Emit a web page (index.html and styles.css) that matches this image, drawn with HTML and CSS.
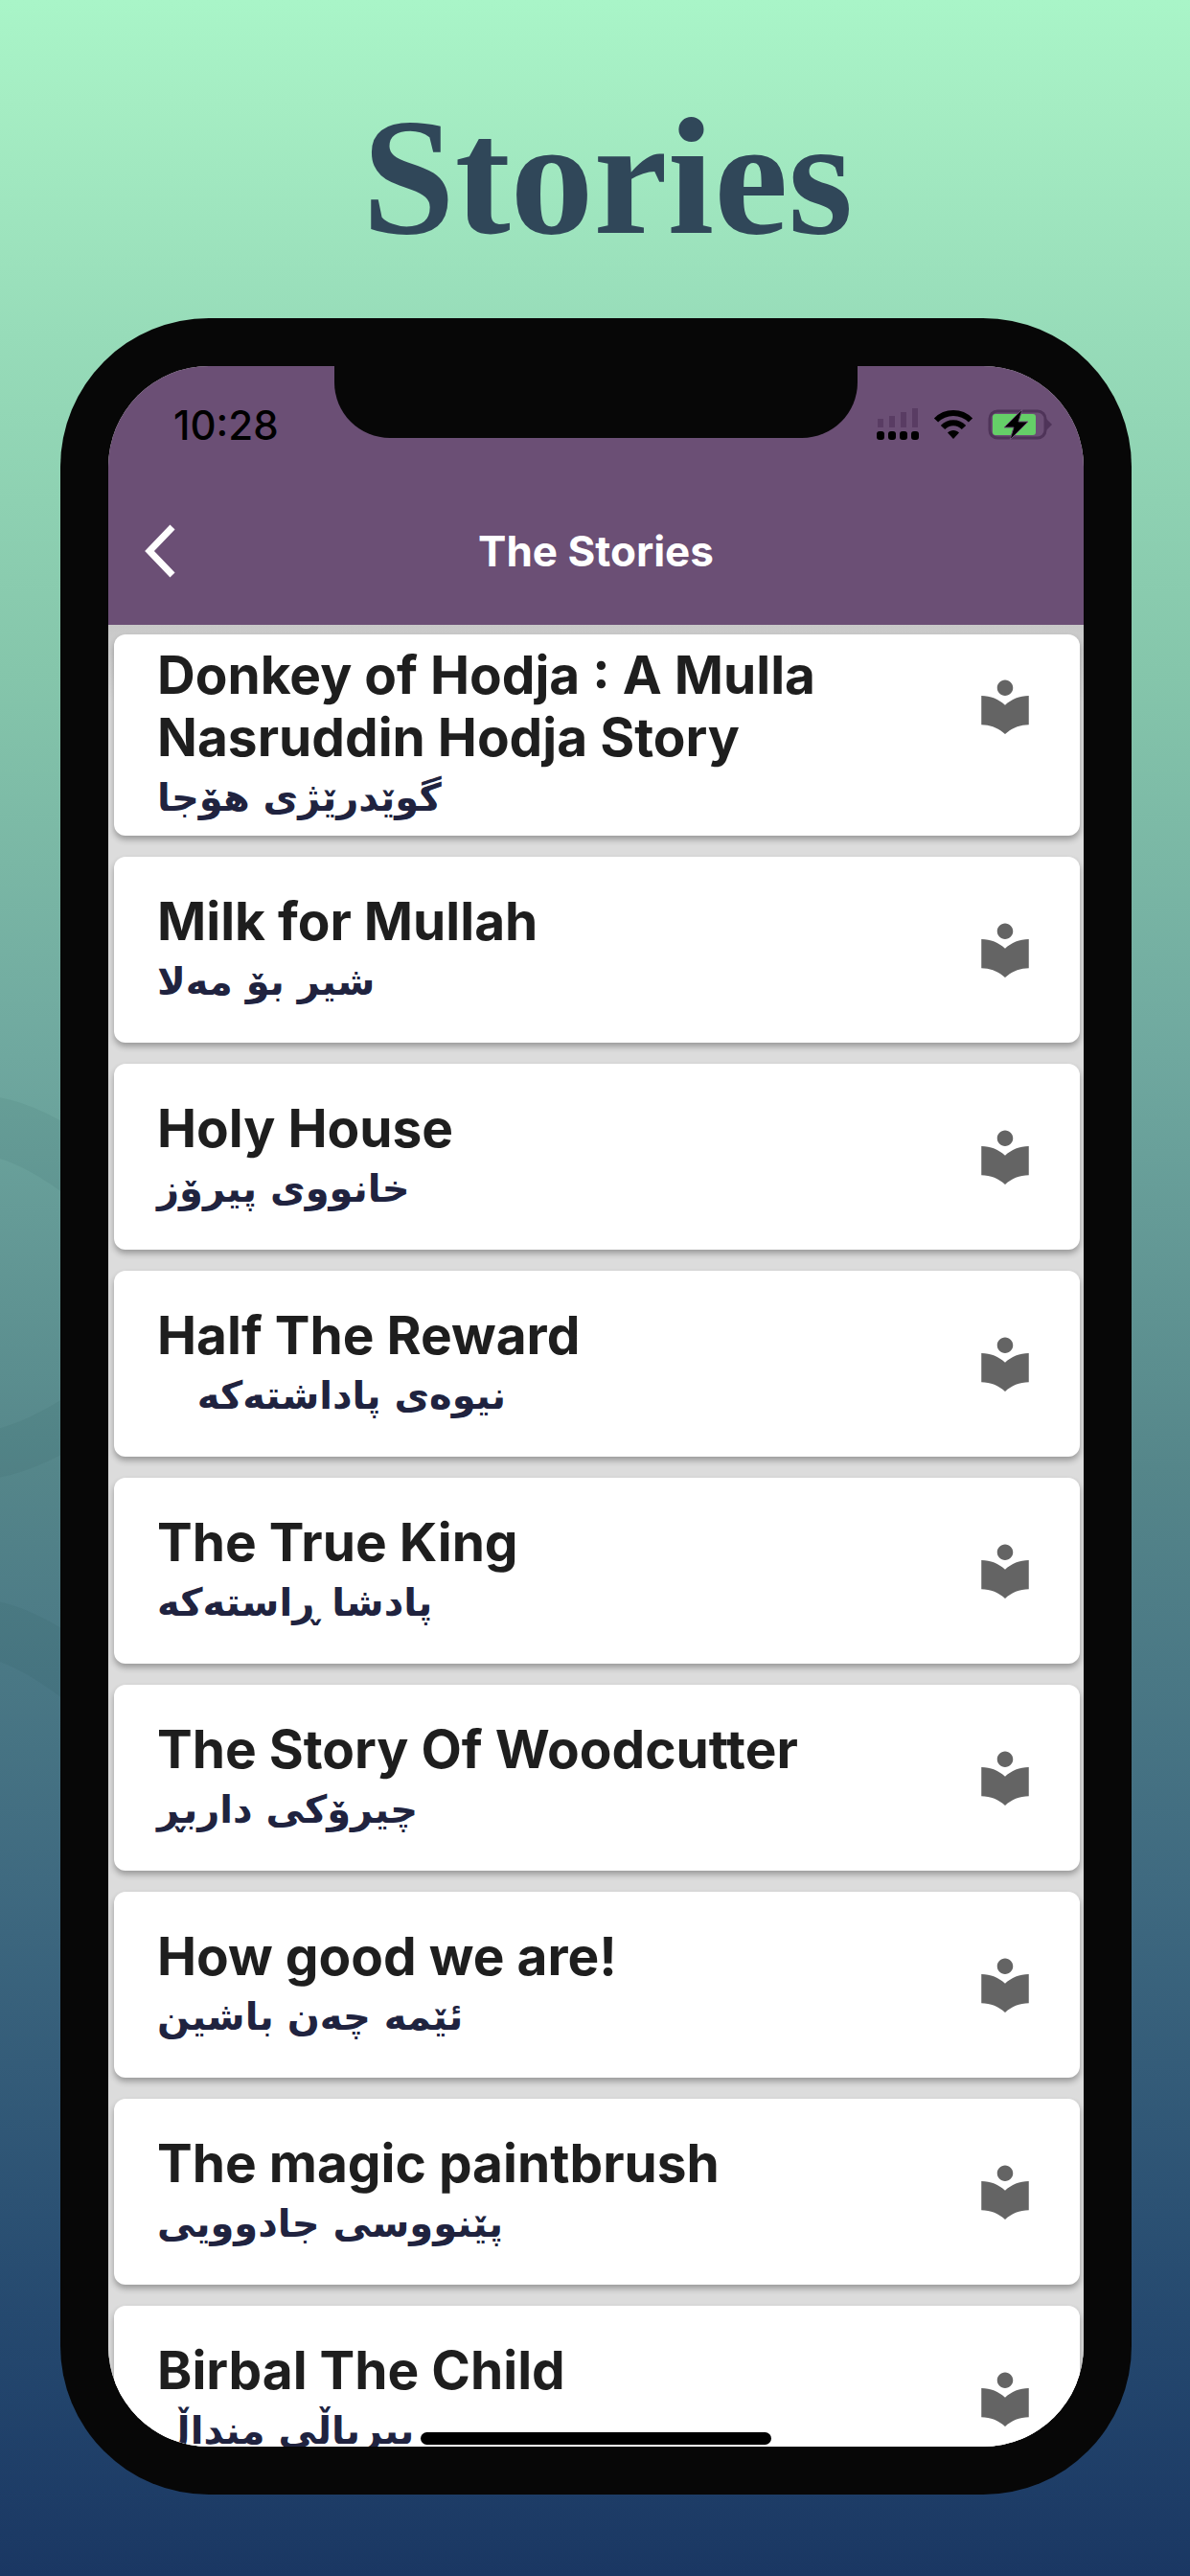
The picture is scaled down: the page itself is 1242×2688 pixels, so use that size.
FILE: index.html
```html
<!DOCTYPE html>
<html lang="en">
<head>
  <meta charset="UTF-8">
  <meta name="viewport" content="width=device-width, initial-scale=1">
  <title>Stories</title>
  <link rel="stylesheet" href="styles.css">
</head>
<body>

<svg class="sprite" aria-hidden="true">
  <symbol id="reader" viewBox="0 0 24 24">
    <path d="M12 11.55C9.64 9.35 6.48 8 3 8v11c3.48 0 6.64 1.35 9 3.55 2.36-2.19 5.52-3.55 9-3.55V8c-3.48 0-6.64 1.35-9 3.55zM12 8c1.66 0 3-1.34 3-3s-1.34-3-3-3-3 1.34-3 3 1.34 3 3 3z"/>
  </symbol>
</svg>

<!-- faint curves behind the phone -->
<svg class="swirl" viewBox="0 0 100 700" aria-hidden="true">
  <g fill="none" stroke="#1d4a4a" stroke-opacity="0.07">
    <path d="M-10 65Q40 72 110 130" stroke-width="62"/>
    <path d="M-10 408Q40 400 110 350" stroke-width="50"/>
    <path d="M-10 590Q40 600 110 660" stroke-width="60"/>
  </g>
</svg>

<h1 class="headline">Stories</h1>

<div class="phone">
  <div class="screen">
    <div class="notch"></div>

    <header class="app-bar">
      <div class="status">
        <span class="time">10:28</span>
        <div class="status-icons">
          <svg class="signal" viewBox="0 0 44 36" aria-hidden="true">
            <g fill="#593c63">
              <rect x="1" y="12" width="6" height="9"/>
              <rect x="13" y="9" width="6" height="12"/>
              <rect x="25" y="5" width="6" height="16"/>
              <rect x="37" y="1" width="6" height="20"/>
            </g>
            <rect x="0" y="25" width="8" height="9" rx="3"/>
            <rect x="12" y="25" width="8" height="9" rx="3"/>
            <rect x="24" y="25" width="8" height="9" rx="3"/>
            <rect x="36" y="25" width="8" height="9" rx="3"/>
          </svg>
          <svg class="wifi" viewBox="0 0 42 32" aria-hidden="true">
            <path d="M3 11.5C13 1.5 29 1.5 39 11.5" fill="none" stroke="#000" stroke-width="6"/>
            <path d="M10 19C16 12.5 26 12.5 32 19" fill="none" stroke="#000" stroke-width="6"/>
            <path d="M21 31l-6-6.5c3-3.5 9-3.5 12 0z"/>
          </svg>
          <svg class="battery" viewBox="0 0 68 34" aria-hidden="true">
            <rect x="2" y="3" width="58" height="28" rx="8" fill="none" stroke="#4f3459" stroke-width="3"/>
            <path d="M61 11l6 6-6 6z" fill="#4f3459"/>
            <rect x="5" y="6" width="45" height="22" rx="3" fill="#65cf68"/>
            <path d="M36 1L17 20h10l-4 13 19-19H32z" stroke="#6b4f75" stroke-width="1"/>
          </svg>
        </div>
      </div>
      <div class="nav">
        <button class="back" aria-label="Back">
          <svg viewBox="0 0 36 56" aria-hidden="true">
            <path d="M31 3L7 28l24 25" fill="none" stroke="#fff" stroke-width="7"/>
          </svg>
        </button>
        <h2>The Stories</h2>
      </div>
    </header>

    <main class="stories">
      <a href="#" class="story story-long">
        <div class="text">
          <h3>Donkey of Hodja : A Mulla Nasruddin Hodja Story</h3>
          <p lang="ckb" dir="rtl">گوێدرێژی هۆجا</p>
        </div>
        <svg class="icon"><use href="#reader"/></svg>
      </a>
      <a href="#" class="story">
        <div class="text">
          <h3>Milk for Mullah</h3>
          <p lang="ckb" dir="rtl">شیر بۆ مەلا</p>
        </div>
        <svg class="icon"><use href="#reader"/></svg>
      </a>
      <a href="#" class="story">
        <div class="text">
          <h3>Holy House</h3>
          <p lang="ckb" dir="rtl">خانووی پیرۆز</p>
        </div>
        <svg class="icon"><use href="#reader"/></svg>
      </a>
      <a href="#" class="story">
        <div class="text">
          <h3>Half The Reward</h3>
          <p lang="ckb" dir="rtl">نیوەی پاداشتەکە&nbsp;&nbsp;&nbsp;</p>
        </div>
        <svg class="icon"><use href="#reader"/></svg>
      </a>
      <a href="#" class="story">
        <div class="text">
          <h3>The True King</h3>
          <p lang="ckb" dir="rtl">پادشا ڕاستەکە</p>
        </div>
        <svg class="icon"><use href="#reader"/></svg>
      </a>
      <a href="#" class="story">
        <div class="text">
          <h3>The Story Of Woodcutter</h3>
          <p lang="ckb" dir="rtl">چیرۆکی داربڕ</p>
        </div>
        <svg class="icon"><use href="#reader"/></svg>
      </a>
      <a href="#" class="story">
        <div class="text">
          <h3>How good we are!</h3>
          <p lang="ckb" dir="rtl">ئێمە چەن باشین</p>
        </div>
        <svg class="icon"><use href="#reader"/></svg>
      </a>
      <a href="#" class="story">
        <div class="text">
          <h3>The magic paintbrush</h3>
          <p lang="ckb" dir="rtl">پێنووسی جادوویی</p>
        </div>
        <svg class="icon"><use href="#reader"/></svg>
      </a>
      <a href="#" class="story">
        <div class="text">
          <h3>Birbal The Child</h3>
          <p lang="ckb" dir="rtl">بیرباڵی منداڵ</p>
        </div>
        <svg class="icon"><use href="#reader"/></svg>
      </a>
    </main>

    <div class="home-bar"></div>
  </div>
</div>

</body>
</html>
```
FILE: styles.css
```css
* {
  box-sizing: border-box;
}
body {
  position: relative;
  margin: 0;
  height: 100vh;
  padding: 0 61px 85px 63px;
  display: flex;
  flex-direction: column;
  font-family: Inter, sans-serif;
  background: linear-gradient(#a9f5c8 0%, #a5edc3 4%, #97dcb9 13%, #85c6ab 26%, #6fa89f 41%, #55868a 57%, #3f6a80 73%, #25496f 90%, #1a3763 100%);
  overflow: hidden;
}
h1, h2, h3, p {
  margin: 0;
}
.sprite {
  position: absolute;
  width: 0;
  height: 0;
}
.swirl {
  position: absolute;
  left: 0;
  top: 1110px;
  width: 100px;
  height: 700px;
}
.headline {
  height: 332px;
  padding-top: 90px;
  padding-left: 24px;
  font-family: "Liberation Serif", serif;
  font-size: 174px;
  line-height: 190px;
  text-align: center;
  color: #304759;
}
.phone {
  position: relative;
  flex: 1;
  min-height: 0;
  padding: 50px;
  border-radius: 155px;
  background: #070707;
}
.screen {
  position: relative;
  height: 100%;
  display: flex;
  flex-direction: column;
  border-radius: 105px;
  background: #dcdcdc;
  overflow: hidden;
}
.notch {
  position: absolute;
  top: 0;
  left: 50%;
  width: 546px;
  height: 75px;
  transform: translateX(-50%);
  border-radius: 0 0 58px 58px;
  background: #070707;
}

.app-bar {
  flex: none;
  background: #6b4f75;
}
.status {
  height: 120px;
  padding: 2px 32px 0 68px;
  display: flex;
  justify-content: space-between;
  align-items: center;
}
.time {
  font-size: 42px;
  font-weight: 500;
}
.status-icons {
  display: flex;
  align-items: center;
  gap: 15px;
}
.signal {
  width: 44px;
  height: 36px;
}
.wifi {
  width: 42px;
  height: 32px;
}
.battery {
  width: 68px;
  height: 34px;
}
.nav {
  height: 150px;
  padding: 0 36px 4px;
  display: grid;
  grid-template-columns: 36px 1fr 36px;
  align-items: center;
}
.nav h2 {
  text-align: center;
  color: #fff;
  font-size: 44px;
  font-weight: 700;
}
.back {
  padding: 0;
  border: none;
  background: none;
  cursor: pointer;
}
.back svg {
  display: block;
  width: 36px;
  height: 56px;
}

.stories {
  flex: 1;
  min-height: 0;
  padding: 10px 4px 0 6px;
  display: flex;
  flex-direction: column;
  gap: 22px;
  overflow: hidden;
  background: linear-gradient(#c8c8c8, #dcdcdc 80px);
}
.story {
  flex: none;
  min-height: 194px;
  padding: 10px 45px;
  display: flex;
  align-items: center;
  justify-content: space-between;
  border-radius: 12px;
  background: #fff;
  box-shadow: 0 4px 6px rgba(0, 0, 0, 0.3);
  text-decoration: none;
}
.text {
  max-width: 760px;
}
.story h3 {
  font-size: 55px;
  font-weight: 700;
  line-height: 65px;
  color: #1e1e1e;
}
.story p {
  width: max-content;
  font-family: "DejaVu Sans", sans-serif;
  font-size: 40px;
  font-weight: 700;
  line-height: 60px;
  color: #20233f;
}
.icon {
  flex: none;
  width: 66px;
  height: 66px;
  fill: #646464;
}
.story-long .icon {
  align-self: flex-start;
  margin-top: 32px;
}
.home-bar {
  position: absolute;
  bottom: 2px;
  left: 50%;
  width: 366px;
  height: 13px;
  transform: translateX(-50%);
  border-radius: 7px;
  background: #000;
}
```
